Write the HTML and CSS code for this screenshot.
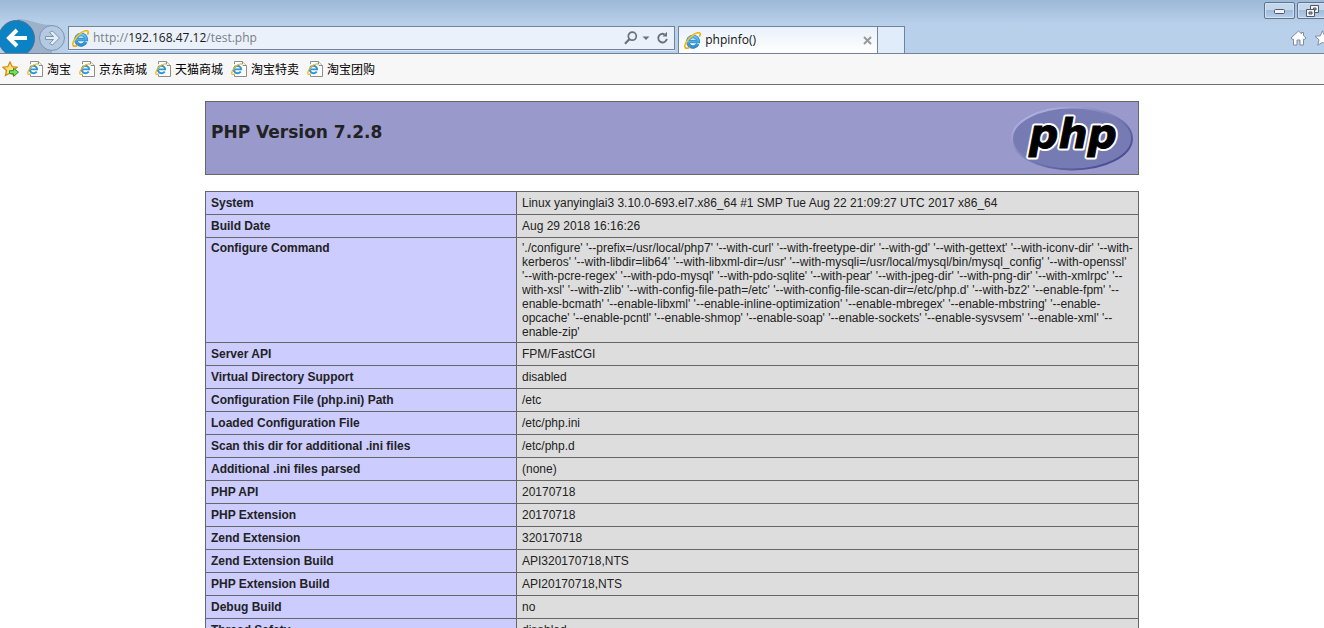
FILE: index.html
```html
<!DOCTYPE html>
<html lang="zh-CN">
<head>
<meta charset="utf-8">
<title>phpinfo()</title>
<link rel="stylesheet" href="styles.css">
</head>
<body>
<svg class="sprite" aria-hidden="true">
  <defs>
    <linearGradient id="blue" x1="0" y1="0" x2="0" y2="1"><stop offset="0" stop-color="#5fc4f0"/><stop offset="1" stop-color="#2a8fd2"/></linearGradient>
    <linearGradient id="rim" x1="0" y1="0" x2="1" y2="1"><stop offset="0.1" stop-color="#b4b7e2"/><stop offset="0.5" stop-color="#777bb3"/><stop offset="0.9" stop-color="#45478f"/></linearGradient>
    <symbol id="ie" viewBox="0 0 16 16">
      <path d="M13 11.400A5 5 0 1 1 13.500 9H5.500" fill="none" stroke="#2b7fbd" stroke-width="3.200"/>
      <path d="M13 11.400A5 5 0 1 1 13.500 9H5.500" fill="none" stroke="url(#blue)" stroke-width="2.200"/>
      <path d="M5.500 14.400C3.500 15.500 1.800 15.600 1.200 14.600 -.2 12.400 3 7 7 3.800 10.500 1 14.400 -.2 15.100 1.400 15.500 2.400 15 3.500 14.600 4.500" fill="none" stroke="#eaac10" stroke-width="1.500"/>
      <path d="M1.500 14C.8 12 3.400 7.300 7.200 4.200 10.500 1.500 14.200 .4 14.800 1.700" fill="none" stroke="#ffd83a" stroke-width=".8"/>
    </symbol>
    <symbol id="page" viewBox="0 0 16 17">
      <path d="M3.500 .5H11.500L15.500 4.500V15.500H3.500Z" fill="#fff" stroke="#8d8d8d"/>
      <path d="M11.500 .5V4.500H15.500" fill="#eee" stroke="#8d8d8d"/>
      <path d="M1 3H12V13.500H1Z" fill="#fff" opacity=".8"/>
      <path d="M9.700 10.400A3.700 3.700 0 1 1 10.200 8.400H4" fill="none" stroke="#2e95d6" stroke-width="1.900"/>
      <path d="M4 12.800C2.500 13.600 1.200 13.600 .9 12.700 .2 11 2.500 7 5.500 4.800 8 2.900 10.800 2.300 11.200 3.500" fill="none" stroke="#f0b41c" stroke-width="1.200"/>
    </symbol>
  </defs>
</svg>

<header class="chrome">
  <div class="titlebar">
    <button class="winbtn" aria-label="Minimize"><svg width="13" height="8" viewBox="0 0 13 8"><rect x="1.500" y="2.500" width="10" height="4" rx="1" fill="#f4f4f4" stroke="#535666"/></svg></button>
    <button class="winbtn" aria-label="Restore"><svg width="13" height="12" viewBox="0 0 13 12"><path d="M4.500 .5H12.500V7.500H4.500Z" fill="#f4f4f4" stroke="#535666"/><path d="M7.500 3H10V5H7.500Z" fill="#8fb3d8" stroke="#535666"/><path d="M.5 4.500H8.500V11.500H.5Z" fill="#f4f4f4" stroke="#535666"/><path d="M3 7H6V9H3Z" fill="#8fb3d8" stroke="#535666"/></svg></button>
  </div>
  <div class="navbar">
    <div class="travel">
      <svg class="swoop" width="68" height="38" viewBox="0 0 68 38" aria-hidden="true"><path d="M17 3C32 3 36 9 52 9V38H17Z" fill="#9db2ca"/></svg>
      <button class="back" aria-label="Back"><svg width="22" height="20" viewBox="0 0 22 20"><path d="M21 10H3M11 2L3 10L11 18" fill="none" stroke="#fff" stroke-width="4"/></svg></button>
      <button class="forward" aria-label="Forward"><svg width="17" height="16" viewBox="0 0 17 16"><path d="M1.500 6.500H9.500L5.500 2.500L8.500 1L15.500 8L8.500 15L5.500 13.500L9.500 9.500H1.500Z" fill="#e2edf8" stroke="#7d93ae"/></svg></button>
    </div>
    <div class="address">
      <svg width="17" height="17"><use href="#ie"/></svg>
      <a class="url" href="#top">http://<span class="host">192.168.47.12</span>/test.php</a>
      <button class="plain" aria-label="Search"><svg width="14" height="14" viewBox="0 0 14 14"><circle cx="8.300" cy="5.200" r="4" fill="none" stroke="#6d7076" stroke-width="1.700"/><path d="M5.300 8.300L1 12.700" stroke="#6d7076" stroke-width="2.200"/></svg></button>
      <button class="plain" aria-label="Show address list"><svg width="8" height="5" viewBox="0 0 8 5"><path d="M.5 .5H7.500L4 4Z" fill="#6d7076"/></svg></button>
      <button class="plain refresh" aria-label="Refresh"><svg width="13" height="14" viewBox="0 0 13 14"><path d="M8.500 3.300A4.300 4.300 0 1 0 10.800 7.800" fill="none" stroke="#6d7076" stroke-width="1.900"/><path d="M6.500 5.500H11V.7Z" fill="#6d7076"/></svg></button>
    </div>
    <div class="tabs">
      <div class="tab">
        <svg width="17" height="17"><use href="#ie"/></svg>
        <span class="tabname">phpinfo()</span>
        <button class="plain" aria-label="Close tab"><svg width="9" height="9" viewBox="0 0 9 9"><path d="M1 1L8 8M8 1L1 8" stroke="#999" stroke-width="2"/></svg></button>
      </div>
      <button class="newtab" aria-label="New tab"></button>
      <div class="tools">
        <button class="plain" aria-label="Home"><svg width="17" height="16" viewBox="0 0 17 16"><path d="M8.500 1L1 8L2 9.200H3.500V15H7V10H10V15H13.500V9.200H15L16 8L13.500 5.700V2.500H11.500V3.800Z" fill="#fff" stroke="#7d8ca0"/></svg></button>
        <button class="plain" aria-label="Favorites"><svg width="17" height="16" viewBox="0 0 17 16"><path d="M8.500 .8L10.700 5.800L16 6.300L12 9.800L13.200 15.200L8.500 12.400L3.800 15.200L5 9.800L1 6.300L6.300 5.800Z" fill="#fff" stroke="#7d8ca0"/></svg></button>
      </div>
    </div>
  </div>
</header>

<nav class="favorites">
  <button class="plain" aria-label="Add to favorites"><svg width="17" height="17" viewBox="0 0 17 17"><path d="M8 1L10.200 5.700L15 6.200L11.500 9.500L12.500 14.500L8 12L3.500 14.500L4.500 9.500L1 6.200L5.800 5.700Z" fill="#ffe27a" stroke="#d58b12" stroke-width="1.300"/><path d="M7.500 9.700H11.500V7.200L16.500 11.200L11.500 15.300V12.700H7.500Z" fill="#7be05a" stroke="#2c9230"/></svg></button>
  <a href="#taobao"><svg width="16" height="17"><use href="#page"/></svg>淘宝</a>
  <a href="#jd"><svg width="16" height="17"><use href="#page"/></svg>京东商城</a>
  <a href="#tmall"><svg width="16" height="17"><use href="#page"/></svg>天猫商城</a>
  <a href="#sale"><svg width="16" height="17"><use href="#page"/></svg>淘宝特卖</a>
  <a href="#group"><svg width="16" height="17"><use href="#page"/></svg>淘宝团购</a>
</nav>

<main class="content" id="top">
  <div class="banner">
    <h1>PHP Version 7.2.8</h1>
    <svg width="122" height="65" viewBox="0 0 122 65" role="img" aria-label="PHP logo">
      <ellipse cx="61" cy="32.500" rx="60" ry="31" fill="#777bb3" stroke="url(#rim)" stroke-width="2"/>
      <text class="logotext halo" x="62" y="42" text-anchor="middle">php</text>
      <text class="logotext" x="62" y="42" text-anchor="middle">php</text>
    </svg>
  </div>
  <table class="info">
    <tbody>
      <tr><th scope="row">System</th><td>Linux yanyinglai3 3.10.0-693.el7.x86_64 #1 SMP Tue Aug 22 21:09:27 UTC 2017 x86_64</td></tr>
      <tr><th scope="row">Build Date</th><td>Aug 29 2018 16:16:26</td></tr>
      <tr class="long"><th scope="row">Configure Command</th><td>'./configure' '--prefix=/usr/local/php7' '--with-curl' '--with-freetype-dir' '--with-gd' '--with-gettext' '--with-iconv-dir' '--with-<wbr>kerberos' '--with-libdir=lib64' '--with-libxml-dir=/usr' '--with-mysqli=/usr/local/mysql/bin/mysql_config' '--with-openssl' '--with-pcre-regex' '--with-pdo-mysql' '--with-pdo-sqlite' '--with-pear' '--with-jpeg-dir' '--with-png-dir' '--with-xmlrpc' '--<wbr>with-xsl' '--with-zlib' '--with-config-file-path=/etc' '--with-config-file-scan-dir=/etc/php.d' '--with-bz2' '--enable-fpm' '--<wbr>enable-bcmath' '--enable-libxml' '--enable-inline-optimization' '--enable-mbregex' '--enable-mbstring' '--enable-<wbr>opcache' '--enable-pcntl' '--enable-shmop' '--enable-soap' '--enable-sockets' '--enable-sysvsem' '--enable-xml' '--<wbr>enable-zip'</td></tr>
      <tr><th scope="row">Server API</th><td>FPM/FastCGI</td></tr>
      <tr><th scope="row">Virtual Directory Support</th><td>disabled</td></tr>
      <tr><th scope="row">Configuration File (php.ini) Path</th><td>/etc</td></tr>
      <tr><th scope="row">Loaded Configuration File</th><td>/etc/php.ini</td></tr>
      <tr><th scope="row">Scan this dir for additional .ini files</th><td>/etc/php.d</td></tr>
      <tr><th scope="row">Additional .ini files parsed</th><td>(none)</td></tr>
      <tr><th scope="row">PHP API</th><td>20170718</td></tr>
      <tr><th scope="row">PHP Extension</th><td>20170718</td></tr>
      <tr><th scope="row">Zend Extension</th><td>320170718</td></tr>
      <tr><th scope="row">Zend Extension Build</th><td>API320170718,NTS</td></tr>
      <tr><th scope="row">PHP Extension Build</th><td>API20170718,NTS</td></tr>
      <tr><th scope="row">Debug Build</th><td>no</td></tr>
      <tr><th scope="row">Thread Safety</th><td>disabled</td></tr>
    </tbody>
  </table>
</main>
</body>
</html>
```

FILE: styles.css
```css
* { box-sizing: border-box; }
html, body { height: 100%; }
body {
  margin: 0;
  display: flex;
  flex-direction: column;
  overflow: hidden;
  background: #fff;
  color: #222;
  font-family: "Liberation Sans", "Noto Sans CJK SC", sans-serif;
}
svg { display: block; flex: none; }
button { margin: 0; padding: 0; border: 0; background: none; font: inherit; flex: none; }
a { color: inherit; text-decoration: none; }
.sprite { position: absolute; width: 0; height: 0; }

.chrome {
  flex: none;
  overflow: hidden;
  background: linear-gradient(#9db9d6, #b9d0ea 24px, #b9d0ea);
  border-bottom: 1px solid #72849c;
}
.titlebar { display: flex; justify-content: flex-end; gap: 2px; height: 26px; padding-top: 2px; margin-right: -4px; }
.winbtn {
  display: flex; align-items: center; justify-content: center;
  width: 31px; height: 17px;
  border: 1px solid #61738e; border-radius: 2px;
  background: linear-gradient(#c3d7ec 50%, #9fbcda 50%, #b5cfe9);
  box-shadow: inset 0 0 0 1px #d3e2f2;
}
.navbar { display: flex; height: 27px; }
.travel { position: relative; flex: none; display: flex; align-items: center; width: 68px; height: 24px; }
.swoop { position: absolute; left: 0; top: -10px; }
.back, .forward { position: relative; display: flex; align-items: center; justify-content: center; border-radius: 50%; }
.back { width: 37px; height: 37px; margin-left: -2px; background: #0a82c4; border: 1px solid #4d708f; }
.forward { width: 26px; height: 26px; margin-left: 4px; background: #b4cae3; border: 1px solid #7d93ae; }
.address {
  flex: 602 1 0; min-width: 0; height: 24px;
  display: flex; align-items: center; gap: 4px;
  padding: 0 5px 0 3px;
  background: #eaf1fa; border: 1px solid #72849c;
  box-shadow: 0 1px 0 #dbe8f6;
}
.url { flex: 1; min-width: 0; font: 12px/20px "Open Sans", sans-serif; color: #7b7f85; white-space: nowrap; }
.host { color: #1a1a1a; }
.refresh { margin-left: 2px; }
.tabs { flex: 651 1 0; min-width: 0; display: flex; padding-left: 3px; }
.tab {
  display: flex; align-items: center; gap: 4px;
  width: 200px; padding: 0 5px;
  border: 1px solid #72849c; border-bottom: 0;
  background: linear-gradient(#e9f1fa, #fff);
}
.tabname { flex: 1; font: 12px/18px "Open Sans", sans-serif; color: #111; }
.newtab { width: 27px; border: 1px solid #72849c; border-width: 1px 1px 0 0; background: #e0ecf9; }
.tools { flex: 1; display: flex; justify-content: flex-end; gap: 7px; height: 24px; margin-right: -7px; }

.favorites {
  flex: none; display: flex; align-items: center; gap: 8px;
  height: 31px; padding: 1px 0 0 2px;
  background: #f7f7f7; border-bottom: 1px solid #6e6e6e;
}
.favorites a { display: flex; align-items: center; gap: 4px; font-size: 12px; line-height: 18px; color: #000; white-space: nowrap; }

.content { flex: 1; min-height: 0; overflow: hidden; padding: 16px 0 0 20px; }
.banner, .info { width: 934px; max-width: 100%; margin: 0 auto 16px; }
.banner {
  display: flex; justify-content: space-between; align-items: flex-start;
  height: 74px; padding: 4px 5px;
  background: #9999cc; border: 1px solid #666;
}
h1 { margin: 15px 0 0; font: bold 17px/22px "DejaVu Sans", sans-serif; }
.logotext {
  font: italic bold 41px "DejaVu Sans", sans-serif;
  fill: #000; stroke: #000; stroke-width: 1px;
}
.halo { stroke: #fff; stroke-width: 5px; stroke-linejoin: round; }
.info { border-collapse: collapse; table-layout: fixed; font-size: 12px; line-height: 14px; }
.info th, .info td { padding: 4px 5px; border: 1px solid #666; text-align: left; vertical-align: top; }
.info th { width: 311px; background: #ccccff; font-weight: bold; }
.info td { background: #dddddd; }
.info .long th, .info .long td { padding-top: 3px; padding-bottom: 3px; }
```
